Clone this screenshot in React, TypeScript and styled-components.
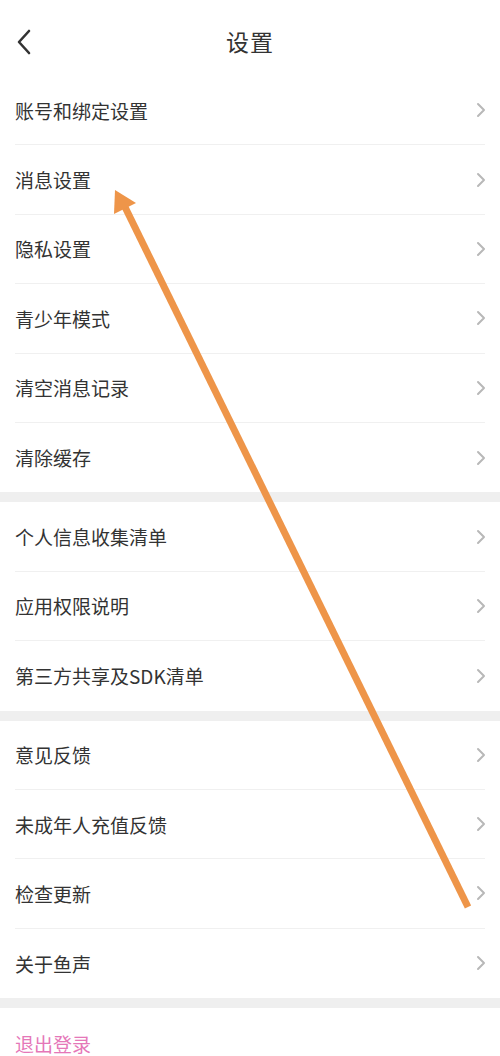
import React from 'react';
import styled, { createGlobalStyle } from 'styled-components';

const GlobalStyle = createGlobalStyle`
  body {
    margin: 0;
    background: #ffffff;
    font-family: "Noto Sans CJK SC", "Noto Sans", sans-serif;
  }
`;

const sections: string[][] = [
  ['账号和绑定设置', '消息设置', '隐私设置', '青少年模式', '清空消息记录', '清除缓存'],
  ['个人信息收集清单', '应用权限说明', '第三方共享及SDK清单'],
  ['意见反馈', '未成年人充值反馈', '检查更新', '关于鱼声'],
];

const App: React.FC = () => {
  return (
    <Page>
      <GlobalStyle />
      <Header>
        <BackButton>
          <svg width="16" height="26" viewBox="0 0 16 26">
            <path d="M13 2 L3 13 L13 24" fill="none" stroke="#333" strokeWidth="2.6" strokeLinecap="round" strokeLinejoin="round" />
          </svg>
        </BackButton>
        <Title>设置</Title>
      </Header>

      {sections.map((items, i) => (
        <React.Fragment key={i}>
          {i > 0 && <Gap />}
          <Section>
            {items.map((label, j) => (
              <Row key={label} $last={j === items.length - 1}>
                <Label>{label}</Label>
                <Chevron width="10" height="16" viewBox="0 0 10 16">
                  <path d="M2 2 L8 8 L2 14" fill="none" stroke="#b8b8b8" strokeWidth="2" strokeLinecap="round" strokeLinejoin="round" />
                </Chevron>
              </Row>
            ))}
          </Section>
        </React.Fragment>
      ))}

      <Gap />
      <LogoutRow>退出登录</LogoutRow>

      {/* 标注箭头 */}
      <Annotation width="500" height="1056" viewBox="0 0 500 1056">
        <line x1="468" y1="907" x2="124" y2="205" stroke="#ee9549" strokeWidth="7" />
        <polygon points="115,190 114,214 136,203" fill="#ee9549" />
      </Annotation>
    </Page>
  );
};

export default App;

const Page = styled.div`
  position: relative;
  width: 500px;
  height: 1056px;
  overflow: hidden;
  background: #ffffff;
`;

const Header = styled.header`
  position: relative;
  height: 76px;
  display: flex;
  align-items: center;
  justify-content: center;
  padding-top: 6px;
  box-sizing: border-box;
`;

const BackButton = styled.div`
  position: absolute;
  left: 16px;
  top: 29px;
  display: flex;
`;

const Title = styled.h1`
  margin: 0;
  font-size: 23px;
  font-weight: 400;
  color: #333;
  letter-spacing: 1px;
`;

const Section = styled.section`
  padding: 0 15px;
`;

const Row = styled.div<{ $last: boolean }>`
  height: 69.4px;
  box-sizing: border-box;
  display: flex;
  align-items: center;
  justify-content: space-between;
  border-bottom: ${(p) => (p.$last ? 'none' : '1px solid #f0f0f0')};
`;

const Label = styled.span`
  font-size: 19px;
  color: #333;
`;

const Chevron = styled.svg`
  margin-right: -1px;
`;

const Gap = styled.div`
  height: 10px;
  background: #efefef;
`;

const LogoutRow = styled.div`
  height: 70px;
  padding: 0 15px;
  display: flex;
  align-items: center;
  font-size: 19px;
  color: #e577b8;
`;

const Annotation = styled.svg`
  position: absolute;
  left: 0;
  top: 0;
  pointer-events: none;
`;
